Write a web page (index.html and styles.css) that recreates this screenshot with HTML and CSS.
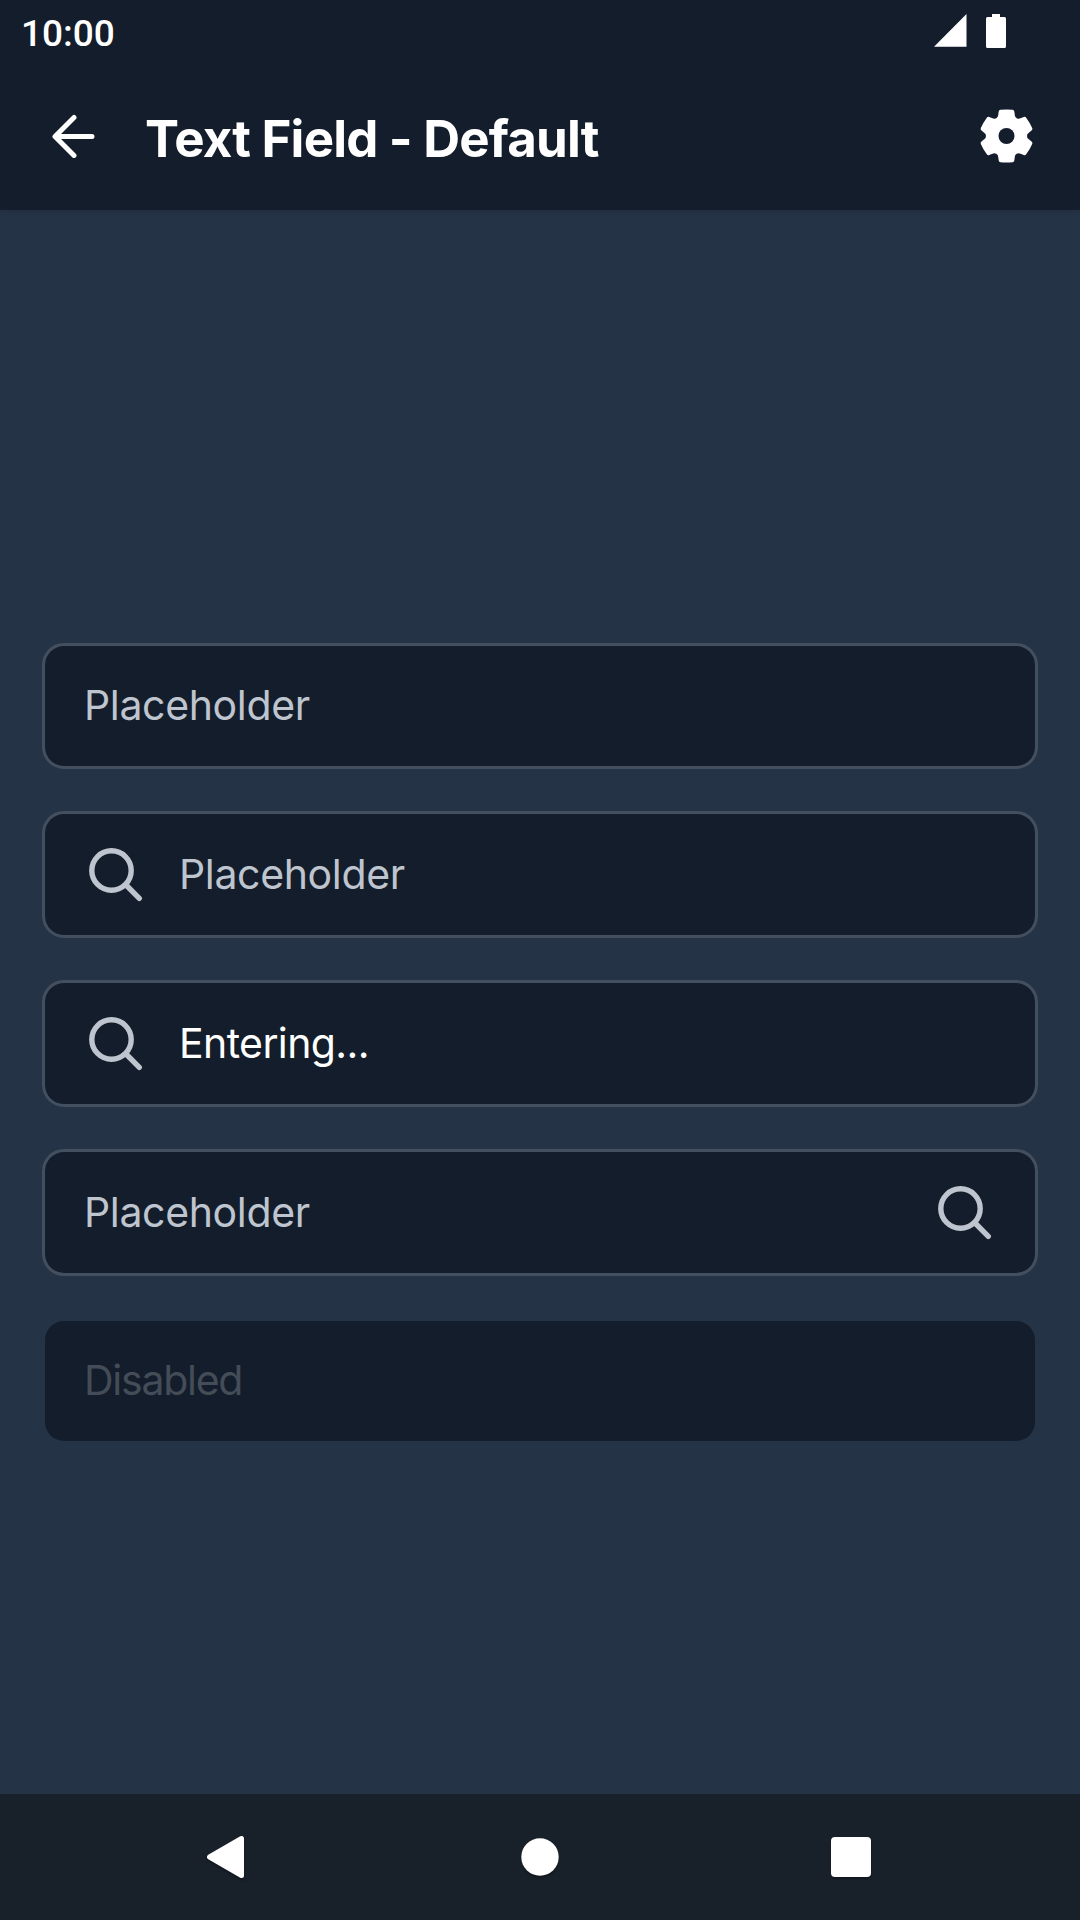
FILE: index.html
```html
<!DOCTYPE html>
<html lang="en">
<head>
<meta charset="utf-8">
<title>Text Field - Default</title>
<link rel="stylesheet" href="styles.css">
</head>
<body>
<svg class="symbols" aria-hidden="true">
  <symbol id="search" viewBox="0 0 63 63">
    <circle cx="27.500" cy="27.500" r="19.700" fill="none" stroke="currentColor" stroke-width="5.400"/>
    <path d="M42 42L55.300 55.300" fill="none" stroke="currentColor" stroke-width="5.400" stroke-linecap="round"/>
  </symbol>
</svg>
<header class="top">
  <div class="status">
    <span class="clock">10:00</span>
    <svg class="signal" viewBox="0 0 33 33"><path d="M32.500 0V32.800H0Z" fill="#fff"/></svg>
    <svg class="battery" viewBox="0 0 20 34"><path d="M6 0h8v3h4.500q1.500 0 1.500 1.500v28q0 1.500-1.500 1.500h-17q-1.500 0-1.500-1.500v-28q0-1.500 1.500-1.500h4.500z" fill="#fff"/></svg>
  </div>
  <div class="bar">
    <svg class="back" viewBox="0 0 44 44"><path d="M41 22.500H5M23 3.500L4 22.500L23 41.500" fill="none" stroke="#fff" stroke-width="5" stroke-linecap="round" stroke-linejoin="round"/></svg>
    <h1 class="title">Text Field - Default</h1>
    <svg class="gear" viewBox="-27.500 -27 54 54">
      <defs><path id="tooth" d="M0 0L-10.300 -17.800C-8.800 -18.600 -8.500 -19.500 -8.300 -21L-7.800 -24.400Q-7.600 -25.900 -6 -26.200Q0 -26.900 6 -26.200Q7.600 -25.900 7.800 -24.400L8.300 -21C8.500 -19.500 8.800 -18.600 10.300 -17.800Z"/></defs>
      <g fill="#fff">
        <circle r="20.200"/>
        <use href="#tooth"/><use href="#tooth" transform="rotate(60)"/><use href="#tooth" transform="rotate(120)"/>
        <use href="#tooth" transform="rotate(180)"/><use href="#tooth" transform="rotate(240)"/><use href="#tooth" transform="rotate(300)"/>
      </g>
      <circle r="8" fill="#141d2b"/>
    </svg>
  </div>
</header>
<main class="content">
  <div class="field short"><span class="text">Placeholder</span></div>
  <div class="field"><svg class="icon"><use href="#search"/></svg><span class="text">Placeholder</span></div>
  <div class="field"><svg class="icon"><use href="#search"/></svg><span class="text entered">Entering...</span></div>
  <div class="field"><span class="text">Placeholder</span><svg class="icon end"><use href="#search"/></svg></div>
  <div class="field short disabled"><span class="text">Disabled</span></div>
</main>
<nav class="nav">
  <svg class="shape" viewBox="0 0 48 48"><path d="M40.500 5.500V42.500L8.500 24Z" fill="#fff" stroke="#fff" stroke-width="5" stroke-linejoin="round"/></svg>
  <svg class="shape" viewBox="0 0 48 48"><circle cx="24" cy="24" r="18.700" fill="#fff"/></svg>
  <svg class="shape" viewBox="0 0 48 48"><rect x="4" y="4" width="40" height="40" rx="4" fill="#fff"/></svg>
</nav>
</body>
</html>
```
FILE: styles.css
```css
* { box-sizing: border-box; }
body {
  margin: 0;
  width: 1080px;
  height: 1920px;
  display: flex;
  flex-direction: column;
  background: #253346;
  font-family: Inter, sans-serif;
  overflow: hidden;
}
svg { display: block; flex: none; }
.symbols { display: none; }
.top { height: 210px; background: #141d2b; box-shadow: 0 1px 6px rgba(10, 20, 30, .15); }
.status { height: 63px; display: flex; padding: 0 74px 0 21px; }
.clock {
  margin-right: auto;
  padding-top: 12px;
  font: 500 37px/44px Roboto, sans-serif;
  color: #fff;
}
.signal { width: 33px; height: 33px; margin: 14px 19px 0 0; }
.battery { width: 20px; height: 34px; margin-top: 14px; }
.bar { height: 147px; display: flex; padding: 0 47px 0 51px; }
.back { width: 44px; height: 44px; margin-top: 51px; }
.title {
  margin: 44px auto 0 50px;
  font-size: 51px;
  line-height: 64px;
  font-weight: 700;
  letter-spacing: -0.8px;
  color: #fff;
  white-space: nowrap;
}
.gear { width: 54px; height: 54px; margin-top: 46px; }
.content {
  flex: 1;
  display: flex;
  flex-direction: column;
  gap: 42px;
  padding: 433px 42px 0;
}
.field {
  height: 127px;
  display: flex;
  align-items: center;
  padding: 0 39px;
  border: 3px solid #434f5e;
  border-radius: 22px;
  background: #141d2b;
  background-clip: padding-box;
  color: #bec5ce;
}
.field.short { height: 126px; }
.icon { width: 63px; height: 63px; margin-right: 32px; }
.icon.end { margin: 0 0 0 auto; }
.text { padding-bottom: 2px; font-size: 41px; line-height: 52px; letter-spacing: -0.35px; white-space: nowrap; }
.entered { letter-spacing: -0.6px; color: #fff; }
.disabled { border-color: transparent; color: #434c57; }
.disabled .text { letter-spacing: -1.25px; }
.nav {
  height: 126px;
  display: flex;
  justify-content: space-between;
  align-items: center;
  padding: 0 205px 0 201px;
  background: #18202a;
}
.shape { width: 48px; height: 48px; filter: drop-shadow(0 2px 1px rgba(0, 0, 0, .3)); }
.shape:nth-child(2) { margin-left: 3px; }
```
